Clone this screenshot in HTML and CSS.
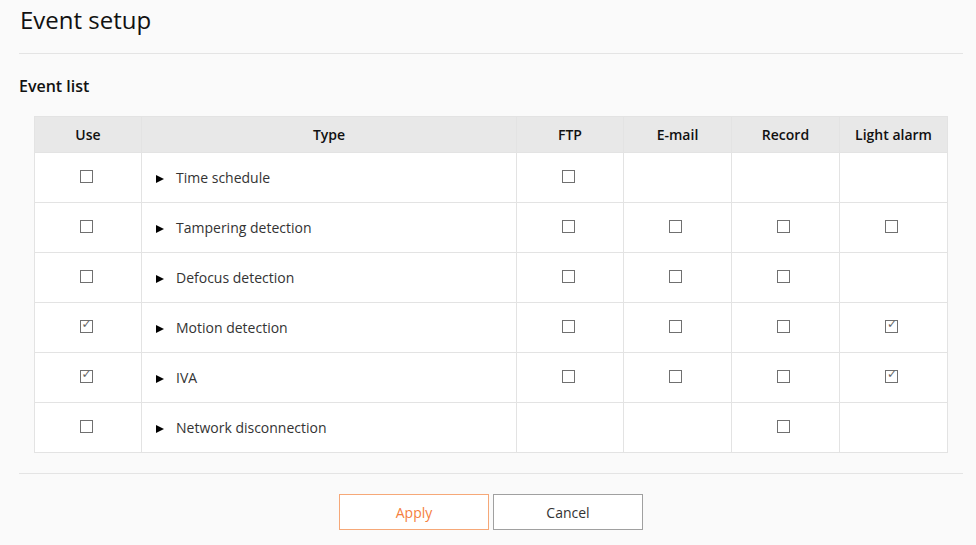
FILE: index.html
```html
<!DOCTYPE html>
<html lang="en">
<head>
  <meta charset="UTF-8">
  <meta name="viewport" content="width=device-width, initial-scale=1.0">
  <title>Event setup</title>
  <link rel="stylesheet" href="styles.css">
</head>
<body>
  <div class="page">
    <h1 class="page-title">Event setup</h1>
    <h2 class="section-title">Event list</h2>
    <table class="event-table">
      <thead>
        <tr>
          <th class="col-use">Use</th>
          <th class="col-type">Type</th>
          <th class="col-ftp">FTP</th>
          <th class="col-act">E-mail</th>
          <th class="col-act">Record</th>
          <th class="col-act">Light alarm</th>
        </tr>
      </thead>
      <tbody>
        <tr>
          <td><span class="cb"></span></td>
          <td class="type"><span class="arrow"></span>Time schedule</td>
          <td><span class="cb"></span></td>
          <td></td>
          <td></td>
          <td></td>
        </tr>
        <tr>
          <td><span class="cb"></span></td>
          <td class="type"><span class="arrow"></span>Tampering detection</td>
          <td><span class="cb"></span></td>
          <td><span class="cb"></span></td>
          <td><span class="cb"></span></td>
          <td><span class="cb"></span></td>
        </tr>
        <tr>
          <td><span class="cb"></span></td>
          <td class="type"><span class="arrow"></span>Defocus detection</td>
          <td><span class="cb"></span></td>
          <td><span class="cb"></span></td>
          <td><span class="cb"></span></td>
          <td></td>
        </tr>
        <tr>
          <td><span class="cb on"></span></td>
          <td class="type"><span class="arrow"></span>Motion detection</td>
          <td><span class="cb"></span></td>
          <td><span class="cb"></span></td>
          <td><span class="cb"></span></td>
          <td><span class="cb on"></span></td>
        </tr>
        <tr>
          <td><span class="cb on"></span></td>
          <td class="type"><span class="arrow"></span>IVA</td>
          <td><span class="cb"></span></td>
          <td><span class="cb"></span></td>
          <td><span class="cb"></span></td>
          <td><span class="cb on"></span></td>
        </tr>
        <tr>
          <td><span class="cb"></span></td>
          <td class="type"><span class="arrow"></span>Network disconnection</td>
          <td></td>
          <td></td>
          <td><span class="cb"></span></td>
          <td></td>
        </tr>
      </tbody>
    </table>
    <div class="actions">
      <button class="btn btn-apply">Apply</button>
      <button class="btn btn-cancel">Cancel</button>
    </div>
  </div>
</body>
</html>
```

FILE: styles.css
```css
body {
  margin: 0;
  background: #fafafa;
  font-family: 'Open Sans', sans-serif;
  color: #222;
}
.page {
  padding: 0 13px 0 19px;
}
.page-title {
  margin: 0;
  padding: 4px 0 0 1px;
  height: 54px;
  box-sizing: border-box;
  font-size: 24px;
  font-weight: 400;
  line-height: 32px;
  color: #111;
  border-bottom: 1px solid #e4e4e4;
}
.section-title {
  margin: 0;
  padding: 20px 0 0 0;
  height: 62px;
  box-sizing: border-box;
  font-size: 16px;
  font-weight: 600;
  line-height: 24px;
  color: #111;
}
.event-table {
  margin: 0 16px 0 15px;
  width: 907px;
  border-collapse: collapse;
  table-layout: fixed;
  background: #fff;
  font-size: 14px;
}
.event-table th,
.event-table td {
  border: 1px solid #e3e3e3;
  text-align: center;
  padding: 0;
}
.event-table th {
  height: 35px;
  background: #e8e8e8;
  font-weight: 600;
  color: #111;
}
.event-table td {
  height: 49px;
}
.col-use { width: 106px; }
.col-type { width: 374px; }
.col-ftp { width: 106px; }
.col-act { width: 107px; }
.event-table td.type {
  text-align: left;
  padding-left: 14px;
  color: #333;
}
.arrow {
  display: inline-block;
  width: 0;
  height: 0;
  border-left: 8px solid #000;
  border-top: 4.5px solid transparent;
  border-bottom: 4.5px solid transparent;
  margin-right: 12px;
  vertical-align: 0;
}
.cb {
  display: inline-block;
  width: 11px;
  height: 11px;
  border: 1px solid #707070;
  background: #fff;
  vertical-align: middle;
  position: relative;
  top: -3px;
  left: -2px;
}
.cb.on::after {
  content: "\2713";
  position: absolute;
  left: 1px;
  top: -4px;
  font-family: 'DejaVu Sans', sans-serif;
  font-size: 12px;
  color: #666;
}
.actions {
  margin-top: 20px;
  border-top: 1px solid #e4e4e4;
  padding-top: 20px;
  display: flex;
  justify-content: center;
  gap: 4px;
}
.btn {
  width: 150px;
  height: 36px;
  background: #fff;
  font-family: 'Open Sans', sans-serif;
  font-size: 14px;
  cursor: pointer;
}
.btn-apply {
  border: 1px solid #f6a878;
  color: #f57f3e;
}
.btn-cancel {
  border: 1px solid #a0a0a0;
  color: #333;
}
```
